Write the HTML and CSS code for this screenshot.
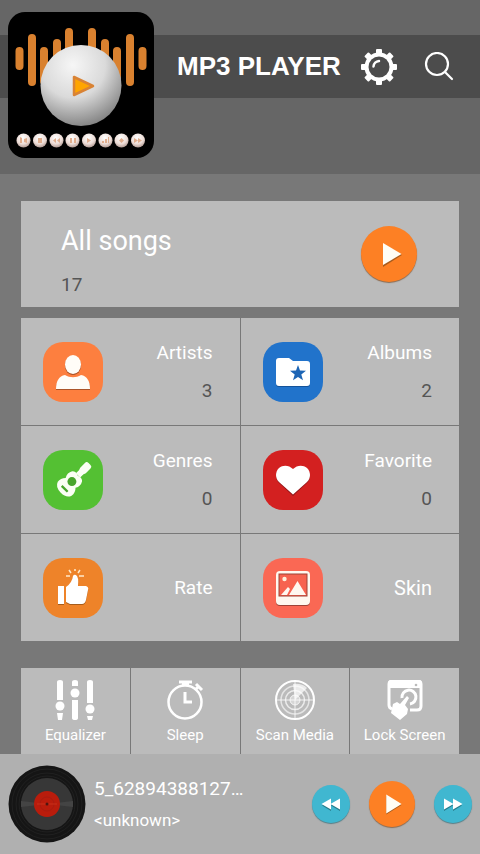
FILE: index.html
```html
<!DOCTYPE html>
<html lang="en">
<head>
<meta charset="utf-8">
<meta name="viewport" content="width=device-width, initial-scale=1">
<title>MP3 Player</title>
<link rel="stylesheet" href="styles.css">
</head>
<body>
<header class="header">
  <div class="toolbar">
    <h1 class="title">MP3 PLAYER</h1>
    <button class="tool" type="button" aria-label="Settings">
      <svg width="38" height="38" viewBox="0 0 38 38">
        <g fill="#fff">
          <g id="teeth"><rect x="16" y="1" width="6" height="36" rx="1"/><rect x="1" y="16" width="36" height="6" rx="1"/></g>
          <use href="#teeth" transform="rotate(45 19 19)"/>
          <circle cx="19" cy="19" r="14.5"/>
        </g>
        <circle cx="19" cy="19" r="10.5" fill="#4c4c4c"/>
        <path d="M13.500 18.500a6 6 0 0 1 5.500-5.500" fill="none" stroke="#fff" stroke-width="2.500" stroke-linecap="round"/>
      </svg>
    </button>
    <button class="tool" type="button" aria-label="Search">
      <svg width="30" height="30" viewBox="0 0 30 30" fill="none" stroke="#fff" stroke-width="2.200" stroke-linecap="round"><circle cx="13" cy="12" r="11"/><path d="M21 20l7 7"/></svg>
    </button>
  </div>
  <svg class="logo" width="146" height="146" viewBox="0 0 146 146" role="img" aria-label="Player logo">
    <defs>
      <radialGradient id="ball" cx=".4" cy=".25" r=".8"><stop offset="0" stop-color="#f6f6f6"/><stop offset=".5" stop-color="#dadada"/><stop offset="1" stop-color="#7c7c7c"/></radialGradient>
      <radialGradient id="bead" cx=".45" cy=".3" r=".75"><stop offset="0" stop-color="#fff"/><stop offset=".6" stop-color="#eddcd6"/><stop offset="1" stop-color="#a78f88"/></radialGradient>
    </defs>
    <rect width="146" height="146" rx="17" fill="#000"/>
    <g stroke="#d9812f" stroke-width="8" stroke-linecap="round">
      <path d="M11.500 39v15M24 26v44M36 39v30M49 31v30M61 20v30M84 20v30M97 31v30M109 39v30M122 26v44M134.500 39v15"/>
    </g>
    <circle cx="73" cy="73.500" r="40.500" fill="url(#ball)"/>
    <path d="M66 65v18l19-9z" fill="#ffa500" stroke="#d98335" stroke-width="2.500" stroke-linejoin="round"/>
    <g fill="url(#bead)">
      <circle cx="15.500" cy="128.500" r="7"/><circle cx="32" cy="128.500" r="7"/><circle cx="48.500" cy="128.500" r="7"/><circle cx="64.500" cy="128.500" r="7"/><circle cx="81" cy="128.500" r="7"/><circle cx="97.500" cy="128.500" r="7"/><circle cx="113.500" cy="128.500" r="7"/><circle cx="130" cy="128.500" r="7"/>
    </g>
    <g fill="#e0ae8e">
      <path d="M12 125l2 1v5h-2zM16 127l3-1v5l-3-1zM30 126h4v5h-4zM48 126v5l-3-2.500zM52 126v5l-3-2.500zM62 126h2v5h-2zM66 126h2v5h-2zM79 126l4 2.500-4 2.500zM94 129h2v2h-2zM97 127h2v4h-2zM100 125h1v6h-1zM111 128.500l2.500-2.500 2.500 2.500-2.500 2.500zM126 126l4 2.500-4 2.500zM130 126l4 2.500-4 2.500z"/>
    </g>
  </svg>
</header>

<main class="content">
  <section class="card all-songs">
    <a class="all-link" href="#songs"><span class="all-name">All songs</span><span class="count">17</span></a>
    <button class="round large" type="button" aria-label="Play all songs"><svg width="56" height="56" viewBox="0 0 56 56"><path d="M22 18v23l19-12z" fill="#a85b1d"/><path d="M22 17v22l18.500-11z" fill="#fffdf5"/></svg></button>
  </section>

  <nav class="grid" aria-label="Library">
    <a class="card tile" href="#artists">
      <svg class="icon artists" width="60" height="60" viewBox="0 0 60 60">
        <g fill="#ab552a" transform="translate(0 1)"><ellipse cx="30" cy="22.500" rx="8" ry="9.500"/><path d="M13 47c0-8 3-13 9-14 5 3 11 3 16 0 6 1 9 6 9 14z"/></g>
        <path d="M13 47c0-8 3-13 9-14 5 3 11 3 16 0 6 1 9 6 9 14z" fill="#fffdf8"/>
        <ellipse cx="30" cy="23.500" rx="8" ry="9.500" fill="#ab552a"/>
        <ellipse cx="30" cy="22.500" rx="8" ry="9.500" fill="#fffdf8"/>
      </svg>
      <span class="label">Artists</span><span class="count">3</span>
    </a>
    <a class="card tile" href="#albums">
      <svg class="icon albums" width="60" height="60" viewBox="0 0 60 60">
        <path d="M13 20q0-3 3-3h10l4 3h14q3 0 3 3v19q0 3-3 3H16q-3 0-3-3z" fill="#14539a"/>
        <path d="M13 19q0-3 3-3h10l4 3h14q3 0 3 3v19q0 3-3 3H16q-3 0-3-3z" fill="#fff"/>
        <path d="M35 23l2 5.500 6 .2-4.700 3.700 1.700 5.900-5-3.400-5 3.400 1.700-5.900-4.700-3.700 6-.2z" fill="#1d65b5"/>
      </svg>
      <span class="label">Albums</span><span class="count">2</span>
    </a>
    <a class="card tile" href="#genres">
      <svg class="icon genres" width="60" height="60" viewBox="0 0 60 60">
        <g fill="#fafff4" transform="translate(2 2) scale(.93) rotate(45 30 30)">
          <path d="M27 8q0-2 2-2h3q2 0 2 2v7l-1 3v4h-5v-4l-1-3z" stroke="#fafff4" stroke-width="1.500"/>
          <path d="M23 24q3-3 7.500-1 4.500-2 7.500 1 3 5 0 10 4 4 3 9-2 6-10.500 6T20 43q-1-5 3-9-3-5 0-10z"/>
          <circle cx="30.500" cy="32" r="4.800" fill="#47a52b"/><path d="M26 43h9" stroke="#47a52b" stroke-width="2.500"/>
        </g>
      </svg>
      <span class="label">Genres</span><span class="count">0</span>
    </a>
    <a class="card tile" href="#favorite">
      <svg class="icon favorite" width="60" height="60" viewBox="0 0 60 60">
        <path d="M30 46L16 33c-4-4-4-10 0-14 4-3.500 10-3 14 1 4-4 10-4.500 14-1 4 4 4 10 0 14z" fill="#94191c"/>
        <path d="M30 44.500L16 32c-4-4-4-10 0-14 4-3.500 10-3 14 1 4-4 10-4.500 14-1 4 4 4 10 0 14z" fill="#fff"/>
      </svg>
      <span class="label">Favorite</span><span class="count">0</span>
    </a>
    <a class="card tile" href="#rate">
      <svg class="icon rate" width="60" height="60" viewBox="0 0 60 60">
        <g fill="#a65c1b" transform="translate(0 1)"><path d="M15 28h6v18h-6zM23 29q6-4 7-11 1-2 3-1 3 2 2 11h8q3 1 2 4l-2 10q-1 4-4 4H27l-4-2z"/></g>
        <g fill="#fff"><path d="M15 28h6v18h-6zM23 29q6-4 7-11 1-2 3-1 3 2 2 11h8q3 1 2 4l-2 10q-1 4-4 4H27l-4-2z"/></g>
        <path d="M23 18h4M36 18h5M26 12l2 3M32 11v2M37 12l-2 3" stroke="#ffe9c9" stroke-width="1.500"/>
      </svg>
      <span class="label">Rate</span>
    </a>
    <a class="card tile" href="#skin">
      <svg class="icon skin" width="60" height="60" viewBox="0 0 60 60">
        <rect x="13" y="14" width="34" height="34" rx="4" fill="#9d4337"/>
        <rect x="13" y="13" width="34" height="34" rx="4" fill="#fff8ef"/>
        <rect x="16" y="16" width="28" height="22" fill="#f7634f" stroke="#9d4337"/>
        <path d="M26 37l8.500-14L43 37zM18 37l7-8 2 2-3 6z" fill="#fff8ef"/><circle cx="21.500" cy="21" r="2.200" fill="#fff1dc"/>
      </svg>
      <span class="label big">Skin</span>
    </a>
  </nav>

  <nav class="shortcuts" aria-label="Tools">
    <a class="card shortcut" href="#equalizer">
      <svg width="40" height="40" viewBox="0 0 40 40" fill="#fff"><path d="M2 2q0-2 3-2t3 2v18H2zM17 2q0-2 3-2t3 2v4h-6zM32 2q0-2 3-2t3 2v21h-6zM2 33h6l-1 7H3zM17 20h6v18q0 2-3 2t-3-2zM32 36h6l-1 4h-4z"/><circle cx="5" cy="26" r="4.500"/><circle cx="20" cy="13" r="4.500"/><circle cx="35" cy="29" r="4.500"/></svg>
      <span>Equalizer</span>
    </a>
    <a class="card shortcut" href="#sleep">
      <svg width="40" height="40" viewBox="0 0 40 40" fill="none" stroke="#fff"><circle cx="20" cy="22" r="16.500" stroke-width="2.500"/><path d="M14 2h13M17 4h7" stroke-width="3"/><path d="M31 4l6 6M30 10l4-4" stroke-width="3"/><path d="M20 12v10h7" stroke-width="3"/></svg>
      <span>Sleep</span>
    </a>
    <a class="card shortcut" href="#scan">
      <svg width="40" height="40" viewBox="0 0 40 40" fill="none" stroke="#fff"><path d="M20 20L18 4q9-1 14 4z" fill="#fff" fill-opacity=".7" stroke="none"/><circle cx="20" cy="20" r="19" stroke-width="2"/><circle cx="20" cy="20" r="14" stroke-width="1.500" stroke-opacity=".6"/><circle cx="20" cy="20" r="9.500" stroke-width="1.500" stroke-opacity=".7"/><circle cx="20" cy="20" r="5" stroke-opacity=".8" fill="#fff" fill-opacity=".4"/><path d="M20 1v38M1 20h38" stroke-opacity=".8"/></svg>
      <span>Scan Media</span>
    </a>
    <a class="card shortcut" href="#lock">
      <svg width="40" height="40" viewBox="0 0 40 40"><path d="M7 29q-3-1-3-4V4q0-3 3-3h26q3 0 3 3v22q0 4-4 4h-7" fill="none" stroke="#fff" stroke-width="3"/><path d="M4 1h31v7H4z" fill="#fff"/><circle cx="31" cy="5" r="1.300" fill="#bbb"/><path d="M17 18a7 7 0 1 1 8 6" fill="none" stroke="#fff" stroke-width="3"/><path d="M22 16l2 2-4 7 3 4-1 5-7 6-9-7 2-9 4-2 3 2z" fill="#fff"/></svg>
      <span>Lock Screen</span>
    </a>
  </nav>
</main>

<footer class="player">
  <svg class="disc" width="78" height="78" viewBox="0 0 78 78" role="img" aria-label="Record">
    <circle cx="39" cy="39" r="38.500" fill="#151515"/>
    <g fill="none" stroke="#202020"><circle cx="39" cy="39" r="35"/><circle cx="39" cy="39" r="31"/><circle cx="39" cy="39" r="28"/></g>
    <circle cx="39" cy="39" r="26" fill="#373737"/>
    <path d="M13 36l26 3-26 3zM65 36l-26 3 26 3z" fill="#444"/>
    <circle cx="39" cy="39" r="13" fill="#b91c0c"/><circle cx="39" cy="39" r="7" fill="none" stroke="#a91b10"/><path d="M29 39h20" stroke="#c8301b"/><circle cx="39" cy="39" r="1.500" fill="#4e1610"/>
  </svg>
  <div class="track"><span class="track-name">5_62894388127…</span><span class="artist">&lt;unknown&gt;</span></div>
  <div class="controls">
    <button class="round small" type="button" aria-label="Previous"><svg width="38" height="38" viewBox="0 0 38 38"><path d="M19 15v11l-9-5.500zM28 15v11l-9-5.500z" fill="#277b8a"/><path d="M19 13.500v11L9.500 19zM28 13.500v11L18.500 19z" fill="#fff"/></svg></button>
    <button class="round" type="button" aria-label="Play"><svg width="46" height="46" viewBox="0 0 48 48"><path d="M18 15v20l16-10z" fill="#a85b1d"/><path d="M18 14v20l16-10z" fill="#fffdf5"/></svg></button>
    <button class="round small" type="button" aria-label="Next"><svg width="38" height="38" viewBox="0 0 38 38"><path d="M10 15v11l9-5.500zM19 15v11l9-5.500z" fill="#277b8a"/><path d="M10 13.500v11l9.500-5.500zM19 13.500v11l9.500-5.500z" fill="#fff"/></svg></button>
  </div>
</footer>
</body>
</html>
```
FILE: styles.css
```css
* {
  box-sizing: border-box;
}

body {
  margin: 0;
  min-height: 100vh;
  display: flex;
  flex-direction: column;
  background: #787878;
  color: #fff;
  font-family: Roboto, "Liberation Sans", sans-serif;
}

a {
  color: inherit;
  text-decoration: none;
}

button {
  padding: 0;
  border: 0;
  background: none;
  cursor: pointer;
}

svg {
  display: block;
  flex: none;
}

.header {
  position: relative;
  padding: 35px 0 76px;
  background: #666;
}

.toolbar {
  display: flex;
  align-items: center;
  gap: 26px;
  padding: 12px 26px 12px 177px;
  background: #4c4c4c;
}

.title {
  flex: 1;
  margin: 0 -8px 0 0;
  font: bold 26px/39px "Liberation Sans", sans-serif;
  white-space: nowrap;
}

.logo {
  position: absolute;
  left: 8px;
  top: 12px;
}

.content {
  flex: 1;
  padding: 27px 21px 0;
}

.card {
  background: #bbb;
}

.all-songs {
  display: flex;
  align-items: center;
  justify-content: space-between;
  padding: 22px 42px 10px 40px;
  margin-bottom: 11px;
}

.all-link {
  display: flex;
  flex-direction: column;
  gap: 14px;
}

.all-name {
  font-size: 27px;
  line-height: 36px;
}

.count {
  color: #555;
  font-size: 19px;
  line-height: 24px;
}

.round {
  display: block;
  border-radius: 50%;
  background: #fd8024;
  box-shadow: 0 1px 1px #8a6a50;
}

.round.large {
  margin-bottom: 12px;
}

.round.small {
  background: #40b7d0;
  box-shadow: 0 1px 1px #557f88;
}

.grid {
  display: grid;
  grid-template-columns: 1fr 1fr;
  gap: 1px;
  margin-bottom: 27px;
}

.tile {
  display: grid;
  grid-template-columns: 60px 1fr;
  align-items: center;
  align-content: center;
  row-gap: 14px;
  min-height: 107px;
  padding: 0 27px 0 22px;
  text-align: right;
}

.icon {
  grid-row: 1 / span 2;
  border-radius: 20px;
}

.icon:has(+ .label:last-child) {
  grid-row: 1;
}

.artists { background: #fd7f3f; }
.albums { background: #2173cb; }
.genres { background: #54c033; }
.favorite { background: #d32020; }
.rate { background: #ee8329; }
.skin { background: #fa6854; }

.label {
  font-size: 19px;
  line-height: 24px;
}

.label.big {
  font-size: 20px;
}

.shortcuts {
  display: grid;
  grid-template-columns: repeat(4, 1fr);
  gap: 1px;
}

.shortcut {
  display: flex;
  flex-direction: column;
  align-items: center;
  gap: 5px;
  padding: 12px 0 9px;
  font-size: 15px;
  line-height: 20px;
  white-space: nowrap;
}

.player {
  display: flex;
  align-items: center;
  gap: 8px;
  min-height: 100px;
  padding: 0 8px;
  background: #b0b0b0;
}

.track {
  flex: 1;
  display: flex;
  flex-direction: column;
  gap: 8px;
}

.track-name {
  font-size: 19px;
  line-height: 24px;
}

.artist {
  font-size: 17px;
  line-height: 22px;
}

.controls {
  display: flex;
  align-items: center;
  gap: 19px;
}
```
